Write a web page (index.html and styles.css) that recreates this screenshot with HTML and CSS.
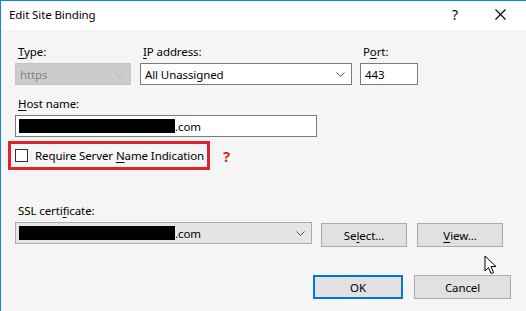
FILE: index.html
```html
<!DOCTYPE html>
<html lang="en">
<head>
  <meta charset="UTF-8">
  <title>Edit Site Binding</title>
  <link rel="stylesheet" href="styles.css">
</head>
<body>
  <article class="dialogWindow">
    <header class="titleBar">
      <span class="titleText">Edit Site Binding</span>
      <span class="titleHelp">?</span>
      <span class="titleClose">
        <svg width="11" height="11" viewBox="0 0 11 11"><path d="M0.5 0.5 L10.5 10.5 M10.5 0.5 L0.5 10.5" stroke="#000" stroke-width="1.1" fill="none"/></svg>
      </span>
    </header>

    <section class="dialogBody">
      <section class="fieldRow topRow">
        <div class="field typeField">
          <label class="fieldLabel"><u>T</u>ype:</label>
          <div class="comboBox disabledBox">
            <span>https</span>
            <svg class="chevron" width="9" height="5" viewBox="0 0 9 5"><path d="M0.5 0.5 L4.5 4.5 L8.5 0.5" stroke="#b4b4b4" fill="none"/></svg>
          </div>
        </div>
        <div class="field ipField">
          <label class="fieldLabel"><u>I</u>P address:</label>
          <div class="comboBox whiteBox">
            <span>All Unassigned</span>
            <svg class="chevron" width="9" height="5" viewBox="0 0 9 5"><path d="M0.5 0.5 L4.5 4.5 L8.5 0.5" stroke="#555" fill="none"/></svg>
          </div>
        </div>
        <div class="field portField">
          <label class="fieldLabel">P<u>o</u>rt:</label>
          <div class="textBox">443</div>
        </div>
      </section>

      <section class="field hostField">
        <label class="fieldLabel"><u>H</u>ost name:</label>
        <div class="textBox"><span class="redacted"></span>.com</div>
      </section>

      <section class="sniRow">
        <div class="sniBox">
          <span class="checkBox"></span>
          <span class="sniText">Require Server <u>N</u>ame Indication</span>
        </div>
        <span class="redQuestion">?</span>
      </section>

      <section class="field sslField">
        <label class="fieldLabel">SSL certi<u>f</u>icate:</label>
        <div class="sslRow">
          <div class="comboBox grayBox sslCombo">
            <span class="redacted sslRedacted"></span><span>.com</span>
            <svg class="chevron" width="9" height="5" viewBox="0 0 9 5"><path d="M0.5 0.5 L4.5 4.5 L8.5 0.5" stroke="#555" fill="none"/></svg>
          </div>
          <button class="winBtn">Se<u>l</u>ect...</button>
          <button class="winBtn"><u>V</u>iew...</button>
        </div>
      </section>

      <section class="bottomBtnWrapper">
        <button class="winBtn bigBtn defaultBtn">OK</button>
        <button class="winBtn bigBtn">Cancel</button>
      </section>
    </section>

    <svg class="mouseCursor" width="14" height="21" viewBox="0 0 14 21">
      <path d="M1 1 L1 16 L4.5 12.5 L7 18.5 L9.5 17.5 L7 11.5 L12 11.5 Z" fill="#fff" stroke="#000" stroke-width="1" stroke-linejoin="round"/>
    </svg>
  </article>
</body>
</html>
```

FILE: styles.css
```css
body {
  margin: 0;
  width: 526px;
  height: 311px;
  overflow: hidden;
  font-family: "Noto Sans", "Liberation Sans", sans-serif;
  font-size: 11.5px;
  letter-spacing: -0.1px;
  color: #000;
}

u {
  text-decoration: underline;
  text-underline-offset: 2px;
}

.dialogWindow {
  position: relative;
  height: 311px;
  border-top: 1px solid #1883d7;
  border-left: 1px solid #1883d7;
  background-color: #f5f5f5;
  box-sizing: border-box;
}

.titleBar {
  height: 29px;
  background-color: #fff;
  display: flex;
  align-items: center;
  padding-left: 8px;
}

.titleText {
  flex: 1;
  padding-bottom: 2px;
}

.titleHelp {
  width: 14px;
  font-size: 14px;
  margin-right: 29px;
  padding-bottom: 2px;
}

.titleClose {
  display: flex;
  margin-right: 20px;
  padding-bottom: 2px;
}

.dialogBody {
  padding: 14px 0 0 14px;
}

.fieldLabel {
  display: block;
  height: 16px;
  line-height: 16px;
  padding-left: 3px;
  margin-bottom: 3px;
}

.topRow {
  display: flex;
  gap: 8px;
}

.typeField {
  width: 116px;
  margin-right: 1px;
}

.ipField {
  width: 212px;
}

.portField {
  width: 58px;
}

.comboBox, .textBox {
  height: 22px;
  box-sizing: border-box;
  display: flex;
  align-items: center;
  padding-left: 4px;
  white-space: nowrap;
}

.comboBox span {
  flex: none;
}

.comboBox .chevron {
  margin-left: auto;
  margin-right: 6px;
}

.disabledBox {
  background-color: #cccccc;
  border: 1px solid #c4c4c4;
  color: #838383;
}

.whiteBox {
  background-color: #fff;
  border: 1px solid #7a7a7a;
}

.grayBox {
  background-color: #e5e5e5;
  border: 1px solid #acacac;
}

.textBox {
  background-color: #fff;
  border: 1px solid #7a7a7a;
}

.hostField {
  margin-top: 11px;
  width: 302px;
}

.redacted {
  display: inline-block;
  width: 156px;
  height: 14px;
  background-color: #000;
  margin-left: -1px;
}

.sniRow {
  display: flex;
  align-items: center;
  margin-top: 4px;
  margin-left: -7px;
}

.sniBox {
  width: 202px;
  height: 29px;
  box-sizing: border-box;
  border: 3px solid #e0242d;
  display: flex;
  align-items: center;
  padding-left: 4px;
  gap: 7px;
}

.sniText {
  white-space: nowrap;
}

.checkBox {
  width: 13px;
  height: 13px;
  box-sizing: border-box;
  border: 1px solid #333;
  background-color: #fff;
}

.redQuestion {
  margin-left: 13px;
  color: #d9262e;
  font-weight: 700;
  font-size: 15px;
}

.sslField {
  margin-top: 33px;
}

.sslRow {
  display: flex;
  align-items: flex-start;
}

.sslCombo {
  width: 297px;
  margin-right: 9px;
}

.sslRedacted {
  width: 156px;
}

.winBtn {
  height: 24px;
  box-sizing: border-box;
  border: 1px solid #adadad;
  background-color: #e1e1e1;
  font-family: inherit;
  font-size: 11.5px;
  letter-spacing: -0.1px;
  color: #000;
  padding: 0;
  margin-top: 1px;
  width: 86px;
  margin-right: 10px;
}

.bottomBtnWrapper {
  display: flex;
  margin-top: 28px;
  padding-left: 298px;
}

.bigBtn {
  width: 90px;
  margin-top: 0;
  margin-right: 11px;
}

.bigBtn:last-child {
  width: 97px;
}

.defaultBtn {
  border: 2px solid #0078d7;
}

.mouseCursor {
  position: absolute;
  left: 483px;
  top: 254px;
}
```
